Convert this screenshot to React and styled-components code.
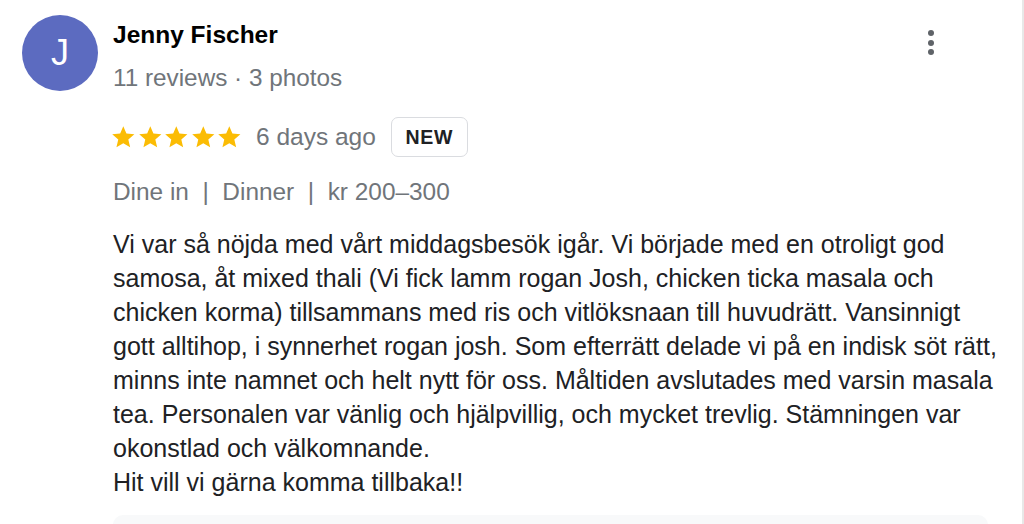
import React from 'react';
import styled, { createGlobalStyle } from 'styled-components';

const GlobalStyle = createGlobalStyle`
  html, body {
    margin: 0;
    padding: 0;
    background: #fff;
  }
  body {
    font-family: "Liberation Sans", Arial, Helvetica, sans-serif;
    -webkit-font-smoothing: antialiased;
  }
`;

const review = {
  author: 'Jenny Fischer',
  initial: 'J',
  meta: '11 reviews · 3 photos',
  rating: 5,
  when: '6 days ago',
  tags: ['Dine in', 'Dinner', 'kr 200–300'],
  text: [
    'Vi var så nöjda med vårt middagsbesök igår. Vi började med en otroligt god samosa, åt mixed thali (Vi fick lamm rogan Josh, chicken ticka masala och chicken korma) tillsammans med ris och vitlöksnaan till huvudrätt. Vansinnigt gott alltihop, i synnerhet rogan josh. Som efterrätt delade vi på en indisk söt rätt, minns inte namnet och helt nytt för oss. Måltiden avslutades med varsin masala tea. Personalen var vänlig och hjälpvillig, och mycket trevlig. Stämningen var okonstlad och välkomnande.',
    'Hit vill vi gärna komma tillbaka!!',
  ],
};

function Star() {
  return (
    <StarIcon viewBox="0 0 24 24">
      <path d="M12 17.27L18.18 21l-1.64-7.03L22 9.24l-7.19-.61L12 2 9.19 8.63 2 9.24l5.46 4.73L5.82 21z" />
    </StarIcon>
  );
}

function App() {
  return (
    <>
      <GlobalStyle />
      <Page>
        <Avatar>{review.initial}</Avatar>
        <Content>
          <Header>
            <div>
              <Name>{review.author}</Name>
              <Meta>{review.meta}</Meta>
            </div>
            <MenuButton aria-label="More options">
              <Dot />
              <Dot />
              <Dot />
            </MenuButton>
          </Header>
          <RatingRow>
            <Stars>
              {Array.from({ length: review.rating }).map((_, i) => (
                <Star key={i} />
              ))}
            </Stars>
            <When>{review.when}</When>
            <Badge>NEW</Badge>
          </RatingRow>
          <Tags>{review.tags.join('  |  ')}</Tags>
          <Body>
            {review.text.map((p, i) => (
              <p key={i}>{p}</p>
            ))}
          </Body>
          <ReplyBox />
        </Content>
      </Page>
    </>
  );
}

const Page = styled.div`
  display: flex;
  align-items: flex-start;
  box-sizing: border-box;
  height: 524px;
  overflow: hidden;
  padding: 15px 0 0 22px;
  border-right: 2px solid #e8e8e8;
`;

const Avatar = styled.div`
  flex: none;
  width: 76px;
  height: 76px;
  border-radius: 50%;
  background: #5c6bc0;
  color: #fff;
  font-size: 36px;
  display: flex;
  align-items: center;
  justify-content: center;
`;

const Content = styled.div`
  flex: 1;
  margin-left: 15px;
  padding-right: 10px;
  display: flex;
  flex-direction: column;
`;

const Header = styled.div`
  display: flex;
  justify-content: space-between;
  align-items: flex-start;
`;

const Name = styled.div`
  margin-top: 5.5px;
  font-size: 24.5px;
  line-height: 28px;
  font-weight: 700;
  color: #000;
`;

const Meta = styled.div`
  margin-top: 14px;
  font-size: 24.3px;
  line-height: 30px;
  color: #70757a;
`;

const MenuButton = styled.button`
  margin: 15px 78px 0 0;
  padding: 0;
  border: 0;
  background: none;
  display: flex;
  flex-direction: column;
  gap: 3.5px;
  cursor: pointer;
`;

const Dot = styled.span`
  width: 6px;
  height: 6px;
  border-radius: 50%;
  background: #5f6368;
`;

const RatingRow = styled.div`
  margin-top: 24.5px;
  height: 40px;
  display: flex;
  align-items: center;
`;

const Stars = styled.div`
  display: flex;
  margin-left: -3px;
`;

const StarIcon = styled.svg`
  width: 26.6px;
  height: 26.6px;
  fill: #fbbc04;
`;

const When = styled.span`
  margin-left: 13px;
  font-size: 24.5px;
  color: #70757a;
`;

const Badge = styled.span`
  margin-left: 15px;
  box-sizing: border-box;
  height: 40px;
  width: 77px;
  border: 1.5px solid #dadce0;
  border-radius: 7px;
  display: flex;
  align-items: center;
  justify-content: center;
  font-size: 19.5px;
  font-weight: 700;
  letter-spacing: 0.8px;
  color: #202124;
`;

const Tags = styled.div`
  margin-top: 19.5px;
  font-size: 24.4px;
  line-height: 30px;
  color: #70757a;
  white-space: pre;
`;

const Body = styled.div`
  margin-top: 20.5px;
  max-width: 895px;
  font-size: 25px;
  line-height: 34px;
  color: #202124;

  p {
    margin: 0;
  }
`;

const ReplyBox = styled.div`
  margin-top: 16px;
  margin-right: 24px;
  height: 60px;
  border-radius: 10px;
  background: #f8f9fa;
`;

export default App;
